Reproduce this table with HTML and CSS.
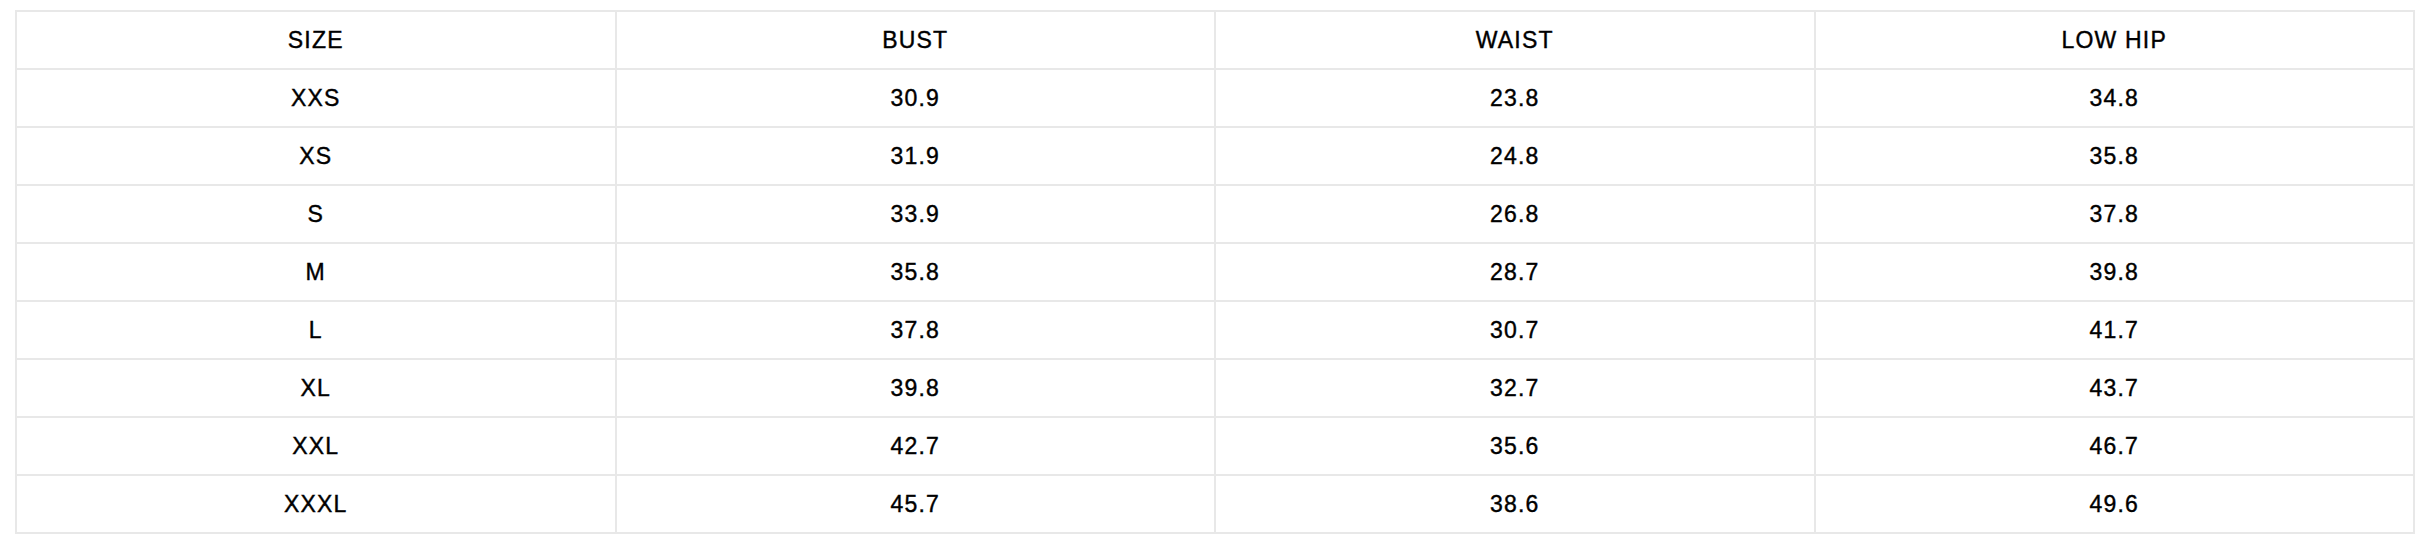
FILE: index.html
```html
<!DOCTYPE html>
<html>
<head>
<meta charset="utf-8">
<link rel="stylesheet" href="styles.css">
</head>
<body>
<div class="wrap">
<table class="size-table">
  <thead>
    <tr><th>SIZE</th><th>BUST</th><th>WAIST</th><th>LOW HIP</th></tr>
  </thead>
  <tbody>
    <tr><td>XXS</td><td>30.9</td><td>23.8</td><td>34.8</td></tr>
    <tr><td>XS</td><td>31.9</td><td>24.8</td><td>35.8</td></tr>
    <tr><td>S</td><td>33.9</td><td>26.8</td><td>37.8</td></tr>
    <tr><td>M</td><td>35.8</td><td>28.7</td><td>39.8</td></tr>
    <tr><td>L</td><td>37.8</td><td>30.7</td><td>41.7</td></tr>
    <tr><td>XL</td><td>39.8</td><td>32.7</td><td>43.7</td></tr>
    <tr><td>XXL</td><td>42.7</td><td>35.6</td><td>46.7</td></tr>
    <tr><td>XXXL</td><td>45.7</td><td>38.6</td><td>49.6</td></tr>
  </tbody>
</table>
</div>
</body>
</html>
```

FILE: styles.css
```css
html, body {
  margin: 0;
  padding: 0;
  background: #ffffff;
}
.wrap {
  padding: 10px 22px 0 15px;
}
.size-table {
  width: 2400px;
  border-collapse: collapse;
  table-layout: fixed;
  font-family: "Liberation Sans", Arial, sans-serif;
  font-size: 23px;
  letter-spacing: 1.2px;
  color: #000000;
  -webkit-text-stroke: 0.4px #000000;
}
.size-table th,
.size-table td {
  border: 2px solid #e8e8e8;
  height: 56px;
  padding: 0;
  text-align: center;
  vertical-align: middle;
  font-weight: normal;
}
```
